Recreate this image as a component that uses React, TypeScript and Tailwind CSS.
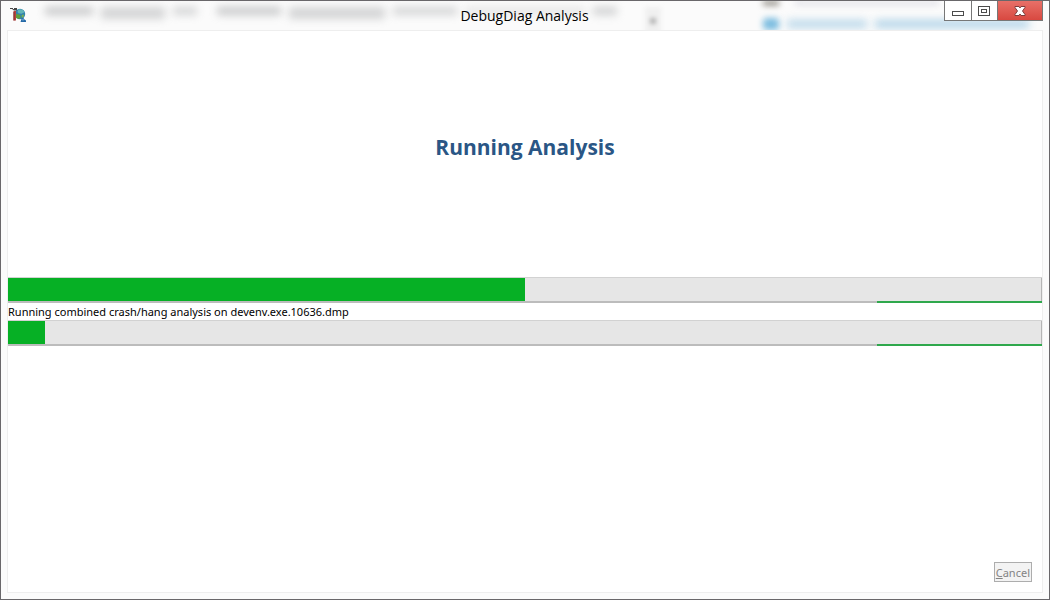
import { useState } from "react";

type ProgressBarProps = {
  label: string;
  value: number;
};

function AppIcon() {
  return (
    <svg className="h-[18px] w-[18px]" viewBox="0 0 18 18" aria-hidden="true">
      <circle cx="11" cy="7" r="5.200" fill="#3183ae" />
      <path d="M9.500 2.500c2.500-1 5 .2 6 2.700l-3 1.500-3-.5-1-1.500z" fill="#62b5b8" />
      <path d="M7 7l3.500.5 1.500 2.500-2 2L7 11z" fill="#5d9f3d" />
      <path d="M12.500 8l2.500-.5-.5 2.500-1.500 1z" fill="#7db34f" />
      <path d="M1 1h3v1H1zM5 1h3v1H5zM3 2h5v1.500H5z" fill="#444" />
      <path d="M4.500 4h2.500v9.500H4.500z" fill="#b8423c" />
      <path d="M4.500 5h1v8.500h-1z" fill="#7c3030" />
      <path d="M11.500 15l1-3 1.500-1.500 1.500 2L17 13.500V15z" fill="#2468a6" />
      <path d="M13.500 12h1v1.500h-1z" fill="#8cc8ea" />
    </svg>
  );
}

// whatever is open behind the glass title bar
function GlassBackdrop() {
  return (
    <div className="pointer-events-none absolute inset-0 flex justify-between overflow-hidden pr-5 pl-11" aria-hidden="true">
      <div className="flex items-start gap-2 pt-1.5">
        <div className="h-2 w-12 bg-[#a5a7a9] opacity-60 blur-[4px]" />
        <div className="h-3 w-16 bg-[#a5a7a9] opacity-45 blur-[4px]" />
        <div className="h-2 w-6 bg-[#a5a7a9] opacity-45 blur-[4px]" />
        <div className="ml-3 h-2 w-16 bg-[#a5a7a9] opacity-60 blur-[4px]" />
        <div className="h-3 w-24 bg-[#a5a7a9] opacity-45 blur-[4px]" />
        <div className="h-2 w-16 bg-[#a5a7a9] opacity-45 blur-[4px]" />
        <div className="h-2 w-30 bg-[#cccccc] opacity-45 blur-[4px]" />
        <div className="h-2 w-6 bg-[#a5a7a9] opacity-50 blur-[4px]" />
        <div className="ml-5 flex h-7 w-4 items-center justify-center bg-[#f0f0f0] blur-[2px]">
          <div className="h-1.5 w-1.5 bg-[#b4b4b4]" />
        </div>
      </div>
      <div className="flex flex-col justify-between">
        <div className="flex gap-4">
          <div className="h-1 w-4 bg-[#77736a] blur-[3px]" />
          <div className="h-1 w-36 bg-[#c9c9d6] opacity-60 blur-[3px]" />
        </div>
        <div className="flex items-center gap-2">
          <div className="h-3 w-4 rounded bg-[#7dbde0] blur-[3px]" />
          <div className="h-2 w-20 bg-[#a9cfe6] opacity-80 blur-[4px]" />
          <div className="h-2 w-[154px] bg-[#a9cfe6] opacity-90 blur-[4px]" />
        </div>
      </div>
    </div>
  );
}

function ProgressBar({ label, value }: ProgressBarProps) {
  return (
    <div
      role="progressbar"
      aria-label={label}
      aria-valuenow={value}
      aria-valuemin={0}
      aria-valuemax={100}
      className="flex h-[26px] flex-col border-t border-t-[#d2d2d2]"
    >
      <div className="flex-1 border-r border-[#b5b5b5] bg-[#e6e6e6]">
        <div className="h-full bg-[#06b025]" style={{ width: `${value}%` }} />
      </div>
      <div className="flex h-0.5 justify-end bg-[#bcbcbc]">
        <div className="w-[16%] bg-[#2fa84c]" />
      </div>
    </div>
  );
}

export default function App() {
  const [cancelled, setCancelled] = useState(false);

  return (
    <div className="flex min-h-screen flex-col border border-[#69676a] bg-[#fbfbfb] font-['Open_Sans','Noto_Sans',sans-serif] text-black">
      <header className="relative flex h-[29px] items-start justify-between pr-1.5 pl-2">
        <GlassBackdrop />
        <div className="relative flex w-24 pt-1.5">
          <AppIcon />
        </div>
        <h1 className="relative pt-1 text-[14px] leading-[22px]">DebugDiag Analysis</h1>
        <div className="relative flex h-5 w-[99px] border border-t-0 border-[#777777] bg-white">
          <button type="button" aria-label="Minimize" className="flex w-[26px] items-center justify-center">
            <svg className="h-4 w-4" viewBox="0 0 16 16" fill="#fff" stroke="#4c4c4c">
              <rect x="2.500" y="8.500" width="11" height="4" />
            </svg>
          </button>
          <button
            type="button"
            aria-label="Maximize"
            className="flex w-[27px] items-center justify-center border-x border-[#777777]"
          >
            <svg className="h-4 w-4" viewBox="0 0 16 16" fill="#fff" stroke="#4c4c4c">
              <rect x="2.500" y="3.500" width="11" height="9" />
              <rect x="5.500" y="6.500" width="5" height="3" />
            </svg>
          </button>
          <button
            type="button"
            aria-label="Close"
            className="flex flex-1 items-center justify-center bg-linear-to-b from-[#e87068] to-[#d84840]"
          >
            <svg className="h-4 w-4" viewBox="0 0 16 16">
              <path
                d="M3 3.500h4l1 1.500 1-1.500h4v1L10.500 8l2.500 3.500v1H9L8 11l-1 1.500H3v-1L5.500 8 3 4.500z"
                fill="#fff"
                stroke="#7d3d3c"
              />
            </svg>
          </button>
        </div>
      </header>

      <main className="mx-1.5 mb-1.5 flex flex-1 flex-col border border-[#eeeeee] bg-white">
        <h2 className="pt-[100px] pb-[114px] text-center text-[21px] leading-8 font-bold text-[#2a5685]">
          Running Analysis
        </h2>

        <section>
          <ProgressBar label="Overall progress" value={50} />
          <p className="font-['Noto_Sans',sans-serif] text-[11px] leading-[17px]">
            {cancelled ? "Cancelling..." : "Running combined crash/hang analysis on devenv.exe.10636.dmp"}
          </p>
          <ProgressBar label="Current dump progress" value={3.6} />
        </section>

        <div className="mt-auto flex justify-end p-[10px]">
          <button
            type="button"
            onClick={() => setCancelled(true)}
            disabled={cancelled}
            className="h-5 border border-[#adadad] bg-[#f3f3f3] px-px font-['Noto_Sans',sans-serif] text-[11px] leading-[17px] text-[#838383]"
          >
            <span className="underline">C</span>ancel
          </button>
        </div>
      </main>
    </div>
  );
}
